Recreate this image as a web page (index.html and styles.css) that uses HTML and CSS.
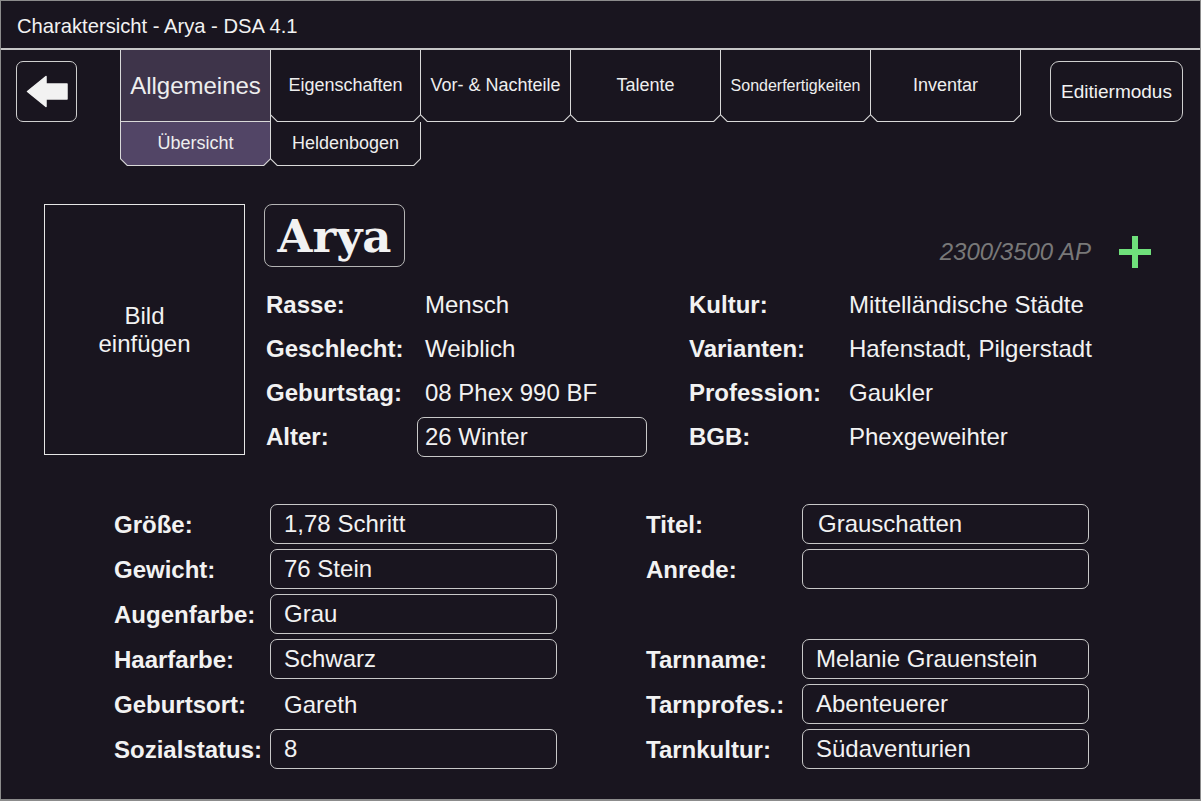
FILE: index.html
```html
<!DOCTYPE html>
<html lang="de">
<head>
<meta charset="utf-8">
<title>Charaktersicht - Arya - DSA 4.1</title>
<link rel="stylesheet" href="styles.css">
</head>
<body>
<div class="window">
  <header class="titlebar">Charaktersicht - Arya - DSA 4.1</header>
  <nav class="nav">
    <div class="back">
      <svg width="61" height="61" viewBox="0 0 61 61" aria-hidden="true">
        <polygon points="11.5,30.5 30,15.5 30,23 51,23 51,38 30,38 30,45.5" fill="#f2f2f2" stroke="#f2f2f2" stroke-width="1.5" stroke-linejoin="round"/>
      </svg>
    </div>
    <div class="tabs">
      <div class="tab-row">
        <div class="tab top current"><span class="tab-inner big">Allgemeines</span></div>
        <div class="tab top"><span class="tab-inner">Eigenschaften</span></div>
        <div class="tab top"><span class="tab-inner">Vor- &amp; Nachteile</span></div>
        <div class="tab top"><span class="tab-inner">Talente</span></div>
        <div class="tab top"><span class="tab-inner small">Sonderfertigkeiten</span></div>
        <div class="tab top"><span class="tab-inner">Inventar</span></div>
      </div>
      <div class="tab-row">
        <div class="tab sub current"><span class="tab-inner">Übersicht</span></div>
        <div class="tab sub"><span class="tab-inner">Heldenbogen</span></div>
      </div>
    </div>
    <div class="edit">Editiermodus</div>
  </nav>

  <section class="upper">
    <div class="picture">Bild<br>einfügen</div>
    <div class="info">
      <div class="info-head">
        <div class="name">Arya</div>
        <div class="ap">2300/3500 AP</div>
        <svg class="plus" width="32" height="32" viewBox="0 0 32 32" aria-hidden="true">
          <rect x="13" y="0" width="6" height="32" fill="#6fe07b"/>
          <rect x="0" y="13" width="32" height="6" fill="#6fe07b"/>
        </svg>
      </div>
      <div class="info-grid">
        <div class="lbl">Rasse:</div><div class="val">Mensch</div>
        <div class="lbl">Kultur:</div><div class="val">Mittelländische Städte</div>
        <div class="lbl">Geschlecht:</div><div class="val">Weiblich</div>
        <div class="lbl">Varianten:</div><div class="val">Hafenstadt, Pilgerstadt</div>
        <div class="lbl">Geburtstag:</div><div class="val">08 Phex 990 BF</div>
        <div class="lbl">Profession:</div><div class="val">Gaukler</div>
        <div class="lbl">Alter:</div><div class="val"><div class="field age">26 Winter</div></div>
        <div class="lbl">BGB:</div><div class="val">Phexgeweihter</div>
      </div>
    </div>
  </section>

  <section class="lower">
    <div class="form">
      <div class="lbl">Größe:</div><div class="field">1,78 Schritt</div>
      <div class="lbl">Gewicht:</div><div class="field">76 Stein</div>
      <div class="lbl">Augenfarbe:</div><div class="field">Grau</div>
      <div class="lbl">Haarfarbe:</div><div class="field">Schwarz</div>
      <div class="lbl">Geburtsort:</div><div class="plain">Gareth</div>
      <div class="lbl">Sozialstatus:</div><div class="field">8</div>
    </div>
    <div class="form">
      <div class="lbl">Titel:</div><div class="field wide-pad">Grauschatten</div>
      <div class="lbl">Anrede:</div><div class="field"></div>
      <div class="lbl"></div><div></div>
      <div class="lbl">Tarnname:</div><div class="field">Melanie Grauenstein</div>
      <div class="lbl">Tarnprofes.:</div><div class="field">Abenteuerer</div>
      <div class="lbl">Tarnkultur:</div><div class="field">Südaventurien</div>
    </div>
  </section>
</div>
</body>
</html>
```

FILE: styles.css
```css
html, body {
  margin: 0;
  padding: 0;
  background: #19151f;
}

.window {
  width: 1201px;
  height: 801px;
  box-sizing: border-box;
  border: 1px solid #8c8c8c;
  border-bottom-width: 2px;
  background: #19151f;
  color: #f2f2f2;
  font-family: "Liberation Sans", Arial, sans-serif;
  overflow: hidden;
}

.titlebar {
  height: 49px;
  box-sizing: border-box;
  padding: 4px 0 0 16px;
  display: flex;
  align-items: center;
  font-size: 20.2px;
  border-bottom: 2px solid #c6c6c6;
}

/* navigation */
.nav {
  display: flex;
  align-items: flex-start;
  height: 116px;
}

.back {
  margin: 11px 0 0 15px;
  width: 61px;
  height: 61px;
  box-sizing: border-box;
  border: 1px solid #cfcfcf;
  border-radius: 7px;
  display: flex;
  align-items: center;
  justify-content: center;
}

.back svg {
  display: block;
  margin: -1px;
}

.tabs {
  margin-left: 43px;
  display: flex;
  flex-direction: column;
}

.tab-row {
  display: flex;
}

.tab {
  width: 151px;
  box-sizing: border-box;
  padding: 0 1px 1px;
  background: #d9d9d9;
  clip-path: polygon(0 0, 100% 0, 100% calc(100% - 7px), calc(100% - 7px) 100%, 7px 100%, 0 calc(100% - 7px));
}

.tab + .tab {
  margin-left: -1px;
}

.tab-inner {
  height: 100%;
  display: flex;
  align-items: center;
  justify-content: center;
  background: #19151f;
  color: #eeeeee;
  clip-path: polygon(0 0, 100% 0, 100% calc(100% - 6.6px), calc(100% - 6.6px) 100%, 6.6px 100%, 0 calc(100% - 6.6px));
}

.tab.top {
  height: 72px;
  font-size: 18px;
}

.tab.top.current {
  clip-path: none;
}

.tab.top.current .tab-inner {
  clip-path: none;
  background: #3e344a;
}

.tab-inner.big {
  font-size: 24px;
}

.tab-inner.small {
  font-size: 16px;
}

.tab.sub {
  height: 44px;
  font-size: 18px;
}

.tab.sub.current .tab-inner {
  background: #524566;
}

.edit {
  margin: 11px 0 0 29px;
  width: 133px;
  height: 61px;
  box-sizing: border-box;
  border: 1px solid #cfcfcf;
  border-radius: 9px;
  display: flex;
  align-items: center;
  justify-content: center;
  font-size: 19px;
  padding-top: 1px;
}

/* upper section */
.upper {
  display: flex;
  align-items: flex-start;
  margin-top: 38px;
  padding-left: 43px;
}

.picture {
  width: 201px;
  height: 251px;
  box-sizing: border-box;
  border: 1px solid #e6e6e6;
  display: flex;
  align-items: center;
  justify-content: center;
  text-align: center;
  font-size: 24px;
  line-height: 28px;
}

.info {
  margin-left: 19px;
  width: 887px;
}

.info-head {
  display: flex;
  align-items: flex-end;
  height: 63px;
}

.name {
  width: 141px;
  height: 63px;
  box-sizing: border-box;
  border: 1px solid #b4b4b4;
  border-radius: 8px;
  display: flex;
  align-items: center;
  justify-content: center;
  font-family: "DejaVu Serif", "Liberation Serif", serif;
  font-weight: bold;
  font-size: 45px;
  padding-top: 2px;
}

.ap {
  margin-left: auto;
  font-size: 24px;
  font-style: italic;
  color: #787878;
  margin-bottom: 1px;
}

.plus {
  display: block;
  margin-left: 28px;
  margin-bottom: -1px;
}

.info-grid {
  margin-top: 15px;
  padding-left: 2px;
  display: grid;
  grid-template-columns: 159px 264px 160px 1fr;
  grid-auto-rows: 44px;
  align-items: center;
  font-size: 24px;
}

.info-grid > div {
  padding-top: 1px;
}

.lbl {
  font-weight: bold;
  font-size: 24px;
  white-space: nowrap;
}

.val {
  white-space: nowrap;
}

.field {
  height: 40px;
  box-sizing: border-box;
  border: 1px solid #c8c8c8;
  border-radius: 7px;
  display: flex;
  align-items: center;
  padding-left: 13px;
  font-size: 24px;
  white-space: nowrap;
}

.field.age {
  width: 230px;
  margin-left: -8px;
  padding-left: 7px;
}

.field.wide-pad {
  padding-left: 15px;
}

/* lower section */
.lower {
  display: flex;
  gap: 89px;
  margin-top: 46px;
  padding-left: 113px;
}

.form {
  display: grid;
  grid-template-columns: 156px 287px;
  grid-auto-rows: 40px;
  row-gap: 5px;
  align-items: center;
}

.form > .lbl {
  padding-top: 1px;
}

.plain {
  padding-left: 14px;
  padding-top: 2px;
  font-size: 24px;
}
```
